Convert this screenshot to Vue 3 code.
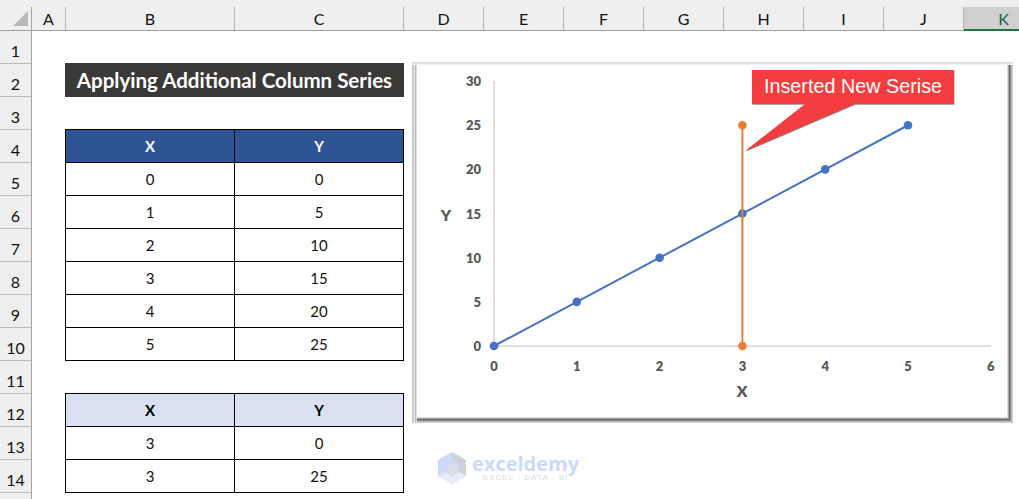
<script setup>
const cols = [
  { name: 'A', w: 34 },
  { name: 'B', w: 169 },
  { name: 'C', w: 169 },
  { name: 'D', w: 80 },
  { name: 'E', w: 80 },
  { name: 'F', w: 80 },
  { name: 'G', w: 80 },
  { name: 'H', w: 80 },
  { name: 'I', w: 80 },
  { name: 'J', w: 80 },
  { name: 'K', w: 55, active: true }
]
const rows = Array.from({ length: 14 }, (_, i) => i + 1)
const mainData = [[0, 0], [1, 5], [2, 10], [3, 15], [4, 20], [5, 25]]
const newData = [[3, 0], [3, 25]]

const px = (x) => 494 - 412 + x * 82.8
const py = (y) => 346 - 62 - y * 8.83
const line = mainData.map(([x, y]) => `${px(x)},${py(y)}`).join(' ')
const callout = '340,8 542,8 542,42 443,42 333,89 393,42 340,42'
</script>

<template>
  <div class="sheet">
    <div class="corner">
      <svg width="32" height="31">
        <polygon points="13,26 28,26 28,11" fill="#b9b9b9" />
        <line x1="31.5" y1="7" x2="31.5" y2="31" stroke="#a6a6a6" />
      </svg>
    </div>
    <div class="col-heads">
      <div
        v-for="c in cols"
        :key="c.name"
        :class="['col-head', { active: c.active }]"
        :style="{ width: c.w + 'px' }"
      >{{ c.name }}</div>
    </div>
    <div class="row-heads">
      <div v-for="r in rows" :key="r" class="row-head">{{ r }}</div>
    </div>
    <div class="cells">
      <div class="left">
        <div class="title">Applying Additional Column Series</div>
        <table class="tbl main">
          <thead><tr><th>X</th><th>Y</th></tr></thead>
          <tbody>
            <tr v-for="(d, i) in mainData" :key="i"><td>{{ d[0] }}</td><td>{{ d[1] }}</td></tr>
          </tbody>
        </table>
        <table class="tbl extra">
          <thead><tr><th>X</th><th>Y</th></tr></thead>
          <tbody>
            <tr v-for="(d, i) in newData" :key="i"><td>{{ d[0] }}</td><td>{{ d[1] }}</td></tr>
          </tbody>
        </table>
      </div>
      <div class="chart">
        <svg class="plot" width="601" height="361" viewBox="0 0 601 361">
          <line x1="82" y1="19" x2="82" y2="284" stroke="#bfbfbf" />
          <line x1="82" y1="284" x2="579" y2="284" stroke="#bfbfbf" />
          <g class="ticks" text-anchor="end">
            <text v-for="v in [0, 5, 10, 15, 20, 25, 30]" :key="v" x="69" :y="py(v) + 5">{{ v }}</text>
          </g>
          <g class="ticks" text-anchor="middle">
            <text v-for="v in [0, 1, 2, 3, 4, 5, 6]" :key="v" :x="px(v)" y="309">{{ v }}</text>
          </g>
          <text class="axis-title" x="34" y="159" text-anchor="middle">Y</text>
          <text class="axis-title" x="330" y="335" text-anchor="middle">X</text>
          <polyline :points="line" fill="none" stroke="#4472c4" stroke-width="2" />
          <circle v-for="(d, i) in mainData" :key="i" :cx="px(d[0])" :cy="py(d[1])" r="4.3" fill="#4472c4" />
          <line :x1="px(3)" :y1="py(0)" :x2="px(3)" :y2="py(25)" stroke="#ed7d31" stroke-width="2" />
          <circle v-for="(d, i) in newData" :key="'n' + i" :cx="px(d[0])" :cy="py(d[1])" r="4.3" fill="#ed7d31" />
          <polygon :points="callout" fill="#8a8a8a" transform="translate(0.4,0.8)" />
          <polygon :points="callout" fill="#f33d3e" />
          <text class="callout" x="441" y="31" text-anchor="middle">Inserted New Serise</text>
        </svg>
      </div>
      <div class="watermark">
        <svg width="28" height="32" viewBox="0 0 28 32">
          <polygon points="14,0 28,8 28,24 14,32 0,24 0,8" fill="#cddafa" />
          <polygon points="14,0 28,8 28,24 21,20 21,12 14,8" fill="#ccd2d8" />
          <polygon points="0,24 7,20 14,24 21,20 28,24 14,32" fill="#e6edf6" />
          <polygon points="14,11 20,15 20,20 14,23 9,20 9,15" fill="#d9dee4" />
        </svg>
        <div class="wm-text">
          <div class="wm-name">exceldemy</div>
          <div class="wm-sub">EXCEL - DATA - BI</div>
        </div>
      </div>
    </div>
  </div>
</template>

<style scoped>
.sheet {
  position: relative;
  width: 1019px;
  height: 499px;
  overflow: hidden;
  display: grid;
  grid-template-columns: 32px 1fr;
  grid-template-rows: 31px 1fr;
  background: #fff;
  font-family: 'Lato', 'Liberation Sans', sans-serif;
  color: #111;
}

.corner {
  background: #efefef;
  border-bottom: 1px solid #a0a0a0;
  box-sizing: border-box;
}

.corner svg {
  display: block;
}

.col-heads {
  display: flex;
  background: #efefef;
  border-bottom: 1px solid #a0a0a0;
  box-sizing: border-box;
  padding-top: 7px;
}

.col-head {
  box-sizing: border-box;
  flex: none;
  height: 23px;
  border-right: 1px solid #b4b4b4;
  text-align: center;
  font-size: 16px;
  line-height: 23px;
}

.col-head.active {
  height: 24px;
  background: #d0d0d0;
  border-right: 0;
  border-bottom: 2px solid #217346;
  padding-left: 24px;
  color: #17614a;
}

.row-heads {
  background: #efefef;
  border-right: 1px solid #a0a0a0;
  box-sizing: border-box;
}

.row-head {
  box-sizing: border-box;
  height: 33px;
  padding-top: 2px;
  border-bottom: 1px solid #bcbcbc;
  text-align: center;
  font-size: 16px;
  line-height: 36px;
}

.cells {
  display: flex;
  align-items: flex-start;
  padding: 32px 0 0 33px;
  min-width: 0;
}

.left {
  flex: none;
  width: 339px;
}

.title {
  height: 34px;
  background: #3b3838;
  color: #fff;
  font-weight: 700;
  font-size: 20.5px;
  line-height: 34px;
  text-align: center;
}

.tbl {
  width: 339px;
  table-layout: fixed;
  border-collapse: collapse;
  font-size: 15px;
}

.tbl th,
.tbl td {
  height: 33px;
  padding: 0;
  box-sizing: border-box;
  border: 1px solid #000;
  text-align: center;
  font-weight: 400;
}

.tbl th {
  font-weight: 700;
}

.main {
  margin-top: 32px;
}

.main th {
  background: #2f5496;
  color: #fff;
}

.extra {
  margin-top: 32px;
}

.extra th {
  background: #d9e1f2;
  color: #000;
}

.chart {
  flex: none;
  width: 601px;
  height: 361px;
  margin: -1px 0 0 8px;
  background: #fff;
  box-shadow:
    inset 0 1px 0 #d8d8d8,
    inset 0 2px 0 #e6e6e6,
    inset 0 3px 0 #f2f2f2,
    inset 2px 0 0 #cbcbcb,
    inset 3px 0 0 #e8e8e8,
    inset 4px 0 0 #bcbcbc,
    inset 5px 0 0 #dedede,
    inset -1px -1px 0 #d0d0d0,
    inset -2px -2px 0 #b8b8b8,
    inset -3px -3px 0 #8c8c8c,
    inset -4px -4px 0 #696969,
    inset -5px -5px 0 #a8a8a8,
    inset -6px -6px 0 #dcdcdc;
}

.plot {
  display: block;
}

.ticks text {
  font-family: 'Lato', 'Liberation Sans', sans-serif;
  font-weight: 800;
  font-size: 13px;
  fill: #595959;
}

.axis-title {
  font-family: 'Lato', 'Liberation Sans', sans-serif;
  font-weight: 800;
  font-size: 15.5px;
  fill: #595959;
}

.callout {
  font-family: 'Liberation Sans', Arial, sans-serif;
  font-size: 19.8px;
  fill: #fff;
}

.watermark {
  position: absolute;
  left: 438px;
  top: 452px;
  display: flex;
  align-items: center;
  gap: 6px;
}

.wm-text {
  display: flex;
  flex-direction: column;
  align-items: center;
}

.wm-name {
  font-family: 'Open Sans', sans-serif;
  font-weight: 700;
  font-size: 20px;
  line-height: 19px;
  color: #cdd9fb;
}

.wm-sub {
  font-family: 'Liberation Sans', sans-serif;
  font-size: 8px;
  line-height: 9px;
  letter-spacing: 1.1px;
  color: #d6dbe2;
}
</style>

<style>
body {
  margin: 0;
  background: #fff;
}
</style>
